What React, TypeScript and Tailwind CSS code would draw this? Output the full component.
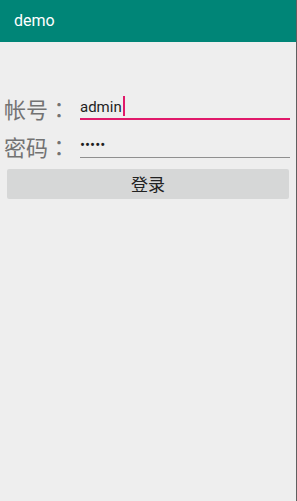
export default function App() {
  return (
    <div className="w-[297px] h-[501px] bg-[#eeeeee] border-r border-[#5f5f5f] flex flex-col font-['Roboto','Noto_Sans_CJK_SC',sans-serif]">
      <header className="h-[42px] shrink-0 bg-[#008577] flex items-center px-[14px] text-white text-[16px] font-normal">
        demo
      </header>

      <div className="pt-[50px] flex flex-col">
        {/* account */}
        <div className="flex items-end h-[28px]">
          <span className="w-[80px] pl-[4px] text-[22px] leading-[24px] text-[#737373] font-['Noto_Sans_CJK_TC',sans-serif]">
            帐号：
          </span>
          <div className="flex-1 mr-[6px] h-full flex items-end pb-[2px] border-b-2 border-[#e0196a]">
            <span className="text-[15px] text-[#1f1f1f] leading-[18px]">admin</span>
            <span className="ml-[1px] mb-[0px] w-[2px] h-[20px] bg-[#e0196a]" />
          </div>
        </div>

        {/* password */}
        <div className="flex items-end h-[28px] mt-[10px]">
          <span className="w-[80px] pl-[4px] text-[22px] leading-[24px] text-[#737373] font-['Noto_Sans_CJK_TC',sans-serif]">
            密码：
          </span>
          <div className="flex-1 mr-[6px] h-full flex items-center pt-[4px] border-b-[1.5px] border-[#8f8f8f]">
            <span className="text-[15px] text-[#1f1f1f] leading-none">•••••</span>
          </div>
        </div>

        <button className="mx-[7px] mt-[11px] h-[30px] bg-[#d6d7d7] rounded-[2px] text-[17px] text-[#222222] font-['Noto_Sans_CJK_SC',sans-serif]">
          登录
        </button>
      </div>
    </div>
  );
}
